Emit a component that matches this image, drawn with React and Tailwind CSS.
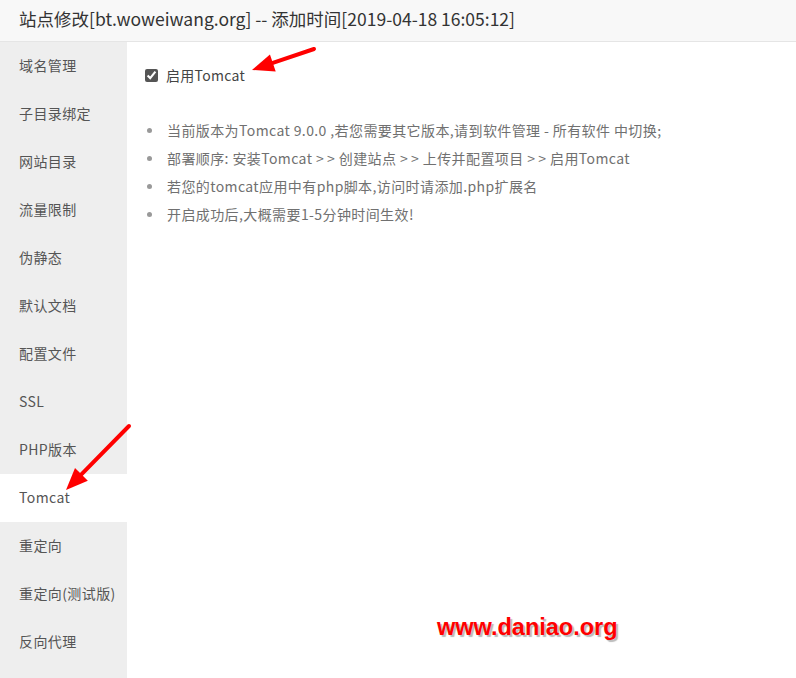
import { useState } from 'react';

const menu = ['域名管理', '子目录绑定', '网站目录', '流量限制', '伪静态', '默认文档', '配置文件', 'SSL', 'PHP版本', 'Tomcat', '重定向', '重定向(测试版)', '反向代理'];

const tips = [
  '当前版本为Tomcat 9.0.0 ,若您需要其它版本,请到软件管理 - 所有软件 中切换;',
  '部署顺序: 安装Tomcat >> 创建站点 >> 上传并配置项目 >> 启用Tomcat',
  '若您的tomcat应用中有php脚本,访问时请添加.php扩展名',
  '开启成功后,大概需要1-5分钟时间生效!',
];

function Arrow({ x1, y1, x2, y2 }) {
  const a = Math.atan2(y2 - y1, x2 - x1);
  const len = 22, w = 9;
  const bx = x2 - len * Math.cos(a), by = y2 - len * Math.sin(a);
  const px = -Math.sin(a) * w, py = Math.cos(a) * w;
  return (
    <g>
      <line x1={x1} y1={y1} x2={bx} y2={by} stroke="#f00" strokeWidth="4" strokeLinecap="round" />
      <polygon points={`${x2},${y2} ${bx + px},${by + py} ${bx - px},${by - py}`} fill="#f00" />
    </g>
  );
}

// ">>" is drawn wider in the original font, space it out a bit
function Tip({ text }) {
  const parts = text.split('>>');
  return parts.map((p, i) => (
    <span key={i}>
      {p}
      {i < parts.length - 1 && <><span className="mr-[3px]">&gt;</span>&gt;</>}
    </span>
  ));
}

export default function App() {
  const [on, setOn] = useState(true);
  const active = 'Tomcat';

  return (
    <div className="relative w-[796px] h-[678px] overflow-hidden bg-white text-[#333]" style={{ fontFamily: '"Noto Sans CJK SC", "Noto Sans", sans-serif' }}>
      {/* title bar */}
      <div className="h-[42px] bg-[#f8f8f8] border-b border-[#e5e5e5] flex items-center px-[19px] pb-[2px] text-[17.5px] text-[#333]">
        站点修改[bt.woweiwang.org] -- 添加时间[2019-04-18 16:05:12]
      </div>
      <div className="flex h-[636px]">
        {/* side menu */}
        <div className="w-[127px] bg-[#eeeeee] flex flex-col">
          {menu.map(m => (
            <div key={m} className={`h-[48px] shrink-0 flex items-center pl-[19px] pb-[2px] text-[14px] tracking-[0.4px] text-[#555] ${m === active ? 'bg-white' : ''}`}>{m}</div>
          ))}
        </div>
        {/* tomcat panel */}
        <div className="flex-1 pl-[18px] pt-[26px]">
          <label className="flex items-center gap-[8px] text-[14px] tracking-[0.3px] text-[#444] h-[14px]">
            <input type="checkbox" checked={on} onChange={e => setOn(e.target.checked)} className="w-[13px] h-[13px] m-0 accent-[#555]" />
            启用Tomcat
          </label>
          <ul className="mt-[34px] flex flex-col">
            {tips.map(t => (
              <li key={t} className="h-[28px] flex items-center text-[14px] tracking-[0.4px] text-[#707070] whitespace-pre">
                <span className="w-[5px] h-[5px] rounded-full bg-[#999] ml-[2px] mr-[15px]" />
                <Tip text={t} />
              </li>
            ))}
          </ul>
        </div>
      </div>
      <svg className="absolute inset-0 pointer-events-none" width="796" height="678">
        <Arrow x1={314} y1={49} x2={252} y2={70} />
        <Arrow x1={129} y1={426} x2={66} y2={490} />
      </svg>
      <div className="absolute left-[437px] top-[610px] text-[23.5px] font-bold text-[#ff0000] [text-shadow:2px_2px_1px_#bbb]" style={{ fontFamily: '"Liberation Sans", sans-serif' }}>
        www.daniao.org
      </div>
    </div>
  );
}
